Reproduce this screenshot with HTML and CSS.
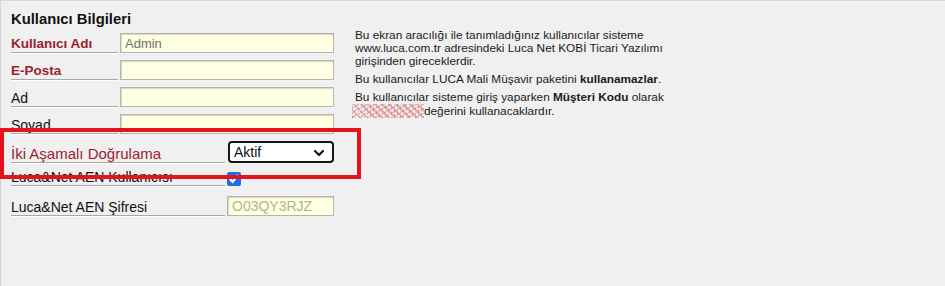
FILE: index.html
```html
<!DOCTYPE html>
<html lang="tr">

<head>
    <meta charset="utf-8">
    <meta name="viewport" content="width=device-width, initial-scale=1.0">
    <title>Kullanıcı Bilgileri</title>
    <link rel="stylesheet" href="styles.css">
</head>

<body>
    <div class="panel">
        <section class="form">
            <h1>Kullanıcı Bilgileri</h1>
            <div class="satir">
                <label class="zorunlu">Kullanıcı Adı</label>
                <input type="text" value="Admin" readonly>
            </div>
            <div class="satir">
                <label class="zorunlu">E-Posta</label>
                <input type="text">
            </div>
            <div class="satir">
                <label>Ad</label>
                <input type="text">
            </div>
            <div class="satir">
                <label>Soyad</label>
                <input type="text">
            </div>
            <div class="satir genis">
                <label class="kirmizi">İki Aşamalı Doğrulama</label>
                <div class="secim">
                    <select>
                        <option>Aktif</option>
                        <option>Pasif</option>
                    </select>
                    <svg class="ok" width="12" height="8" viewBox="0 0 12 8">
                        <path d="M2 2 L6 6 L10 2" fill="none" stroke="#111" stroke-width="2.2" stroke-linecap="round" stroke-linejoin="round" />
                    </svg>
                </div>
            </div>
            <div class="satir genis kutu">
                <label>Luca&amp;Net AEN Kullanıcısı</label>
                <div><input type="checkbox" checked></div>
            </div>
            <div class="satir genis">
                <label>Luca&amp;Net AEN Şifresi</label>
                <input type="text" class="sifre" value="O03QY3RJZ" disabled>
            </div>
        </section>

        <section class="bilgi">
            <p>Bu ekran aracılığı ile tanımladığınız kullanıcılar sisteme www.luca.com.tr adresindeki Luca Net KOBİ Ticari Yazılımı girişinden gireceklerdir.</p>
            <p>Bu kullanıcılar LUCA Mali Müşavir paketini <b>kullanamazlar</b>.</p>
            <p>Bu kullanıcılar sisteme giriş yaparken <b>Müşteri Kodu</b> olarak <span class="gizli"></span>değerini kullanacaklardır.</p>
        </section>

        <!-- isaretleme -->
        <div class="cerceve"></div>
    </div>
</body></html>
```

FILE: styles.css
```css
* {
    box-sizing: border-box;
}

body {
    margin: 0;
    background-color: #f0f0f0;
    font-family: "Liberation Sans", Arial, sans-serif;
}

.panel {
    position: relative;
    display: flex;
    height: 286px;
    border-top: 1px solid #d9d9d9;
    border-left: 1px solid #d4d4d4;
    padding-left: 10px;
}

h1 {
    font-size: 14.8px;
    font-weight: bold;
    color: #111;
    margin: 11px 0 6px 0;
    line-height: 15px;
}

.form {
    width: 324px;
}

.satir {
    display: grid;
    grid-template-columns: 107px 214px;
    column-gap: 2px;
    align-items: end;
    margin-bottom: 7px;
}

.satir label {
    font-size: 14px;
    color: #111;
    line-height: 16px;
    border-bottom: 1px solid #a8a8a8;
    box-shadow: 0 1px 0 #ffffff;
    white-space: nowrap;
}

.zorunlu {
    font-weight: bold;
    color: #9c2230 !important;
    font-size: 13.5px !important;
}

.kirmizi {
    color: #9c2230 !important;
    font-size: 15px !important;
}

.satir input[type="text"] {
    height: 20px;
    background-color: #ffffe1;
    border: 1px solid #b4b4b4;
    box-shadow: inset 1px 1px 1px #d8d8c0;
    font-family: "Liberation Sans", Arial, sans-serif;
    font-size: 13px;
    color: #707070;
    padding: 0 4px;
    outline: none;
}

.genis {
    grid-template-columns: 214px 107px;
}

.genis:nth-of-type(6) {
    margin-top: -1px;
    margin-bottom: 10px;
}

.secim {
    position: relative;
    margin-left: 1px;
}

.secim select {
    appearance: none;
    width: 106px;
    height: 22px;
    background-color: #fff;
    border: 2px solid #151515;
    border-radius: 4px;
    font-family: "Liberation Sans", Arial, sans-serif;
    font-size: 14px;
    color: #111;
    padding: 0 4px;
}

.ok {
    position: absolute;
    right: 9px;
    top: 8px;
}

.kutu {
    margin-bottom: 6px;
}

.kutu input {
    margin: 0;
    width: 14px;
    height: 14px;
    accent-color: #1a6ee8;
    display: block;
}

.satir input.sifre {
    color: #b4b48c;
    font-size: 14px;
    opacity: 1;
}

.bilgi {
    margin-left: 20px;
    padding-top: 28px;
    width: 330px;
    font-size: 11.8px;
    line-height: 13px;
    color: #1a1a1a;
}

.bilgi p {
    margin: 0 0 5px 0;
}

.gizli {
    display: inline-block;
    vertical-align: -3px;
    width: 72px;
    height: 14px;
    margin-left: -3px;
    background-color: #f4eeee;
    background-image:
        repeating-linear-gradient(45deg, rgba(210, 60, 70, 0.35) 0 2px, transparent 2px 5px),
        repeating-linear-gradient(-30deg, rgba(200, 40, 50, 0.3) 0 1px, transparent 1px 4px),
        repeating-linear-gradient(90deg, rgba(150, 150, 150, 0.25) 0 1px, transparent 1px 3px);
}

/* kirmizi cerceve */
.cerceve {
    position: absolute;
    left: -1px;
    top: 127px;
    width: 361px;
    height: 51px;
    border: 4px solid #e4141e;
}
```
